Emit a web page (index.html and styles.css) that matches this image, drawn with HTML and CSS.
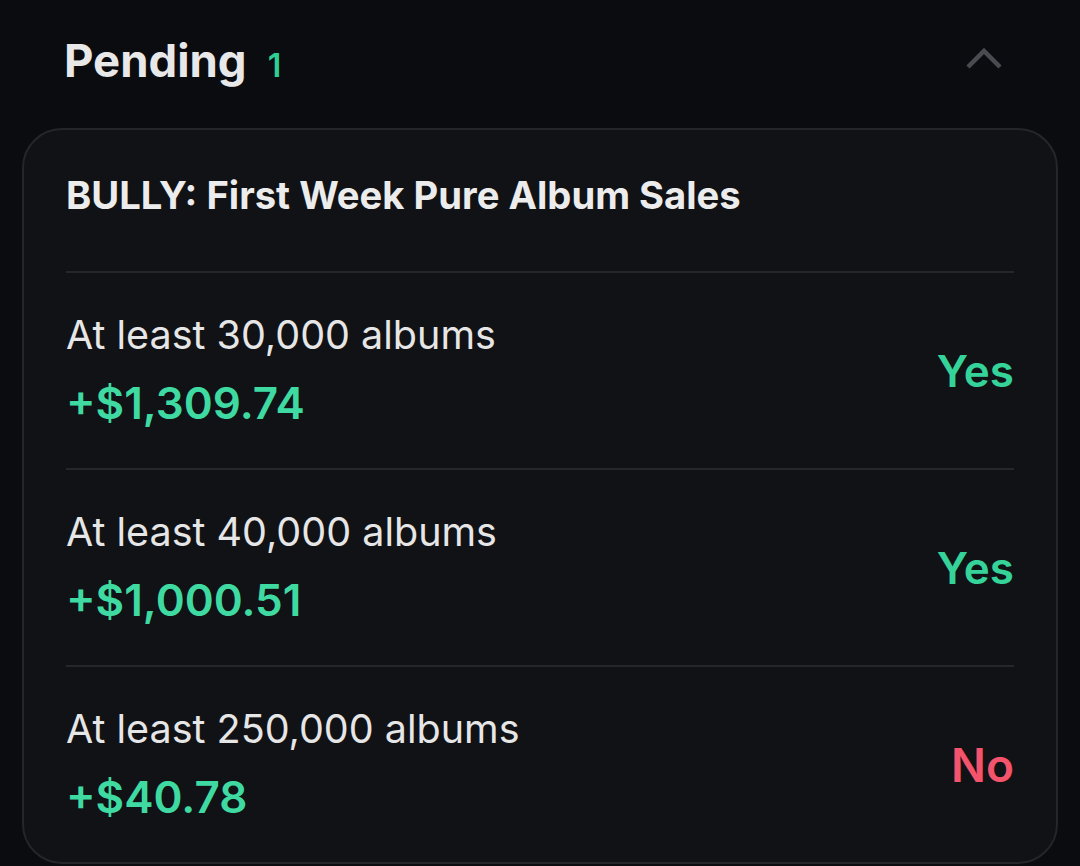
FILE: index.html
```html
<!DOCTYPE html>
<html>
<head>
<meta charset="utf-8">
<link rel="stylesheet" href="styles.css">
</head>
<body>
<div class="page">
  <header class="section-head">
    <div class="head-title">
      <span class="head-label">Pending</span>
      <span class="head-count">1</span>
    </div>
    <svg class="chevron" width="40" height="28" viewBox="0 0 40 28">
      <path d="M4 22 L20 6 L36 22" fill="none" stroke="#4a4b50" stroke-width="4.5" stroke-linecap="butt" stroke-linejoin="miter"/>
    </svg>
  </header>
  <section class="card">
    <div class="card-title">BULLY: First Week Pure Album Sales</div>
    <div class="row">
      <div class="row-main">
        <div class="row-label">At least 30,000 albums</div>
        <div class="row-amount">+$1,309.74</div>
      </div>
      <div class="row-side yes">Yes</div>
    </div>
    <div class="row">
      <div class="row-main">
        <div class="row-label">At least 40,000 albums</div>
        <div class="row-amount">+$1,000.51</div>
      </div>
      <div class="row-side yes">Yes</div>
    </div>
    <div class="row">
      <div class="row-main">
        <div class="row-label">At least 250,000 albums</div>
        <div class="row-amount">+$40.78</div>
      </div>
      <div class="row-side no">No</div>
    </div>
  </section>
</div>
</body>
</html>
```
FILE: styles.css
```css
* { box-sizing: border-box; }
html, body {
  margin: 0;
  padding: 0;
  background: #0b0c0f;
}
body {
  font-family: Inter, "Noto Sans", "Liberation Sans", sans-serif;
  color: #e9e9ea;
  width: 1080px;
  height: 866px;
  overflow: hidden;
}
.page {
  display: flex;
  flex-direction: column;
}
.section-head {
  height: 128px;
  display: flex;
  align-items: center;
  justify-content: space-between;
  padding: 0 76px 8px 64px;
}
.head-title {
  display: flex;
  align-items: baseline;
  gap: 21px;
}
.head-label {
  font-size: 45.5px;
  font-weight: 700;
  color: #e8e8e9;
}
.head-count {
  font-size: 32px;
  font-weight: 600;
  color: #2fcf94;
}
.chevron {
  display: block;
  margin-top: -2px;
}
.card {
  margin: 0 22px;
  height: 736px;
  border: 2px solid #25262a;
  border-radius: 40px;
  background: #111215;
  padding: 0 42px;
  display: flex;
  flex-direction: column;
}
.card-title {
  height: 143px;
  flex: none;
  display: flex;
  align-items: center;
  padding-bottom: 12px;
  font-size: 38.2px;
  font-weight: 700;
  color: #ececed;
  border-bottom: 2px solid #26272b;
}
.row {
  height: 197px;
  flex: none;
  display: flex;
  align-items: center;
  justify-content: space-between;
  border-bottom: 2px solid #26272b;
  padding-top: 0;
}
.row:last-child {
  border-bottom: none;
  height: 195px;
}
.row-main {
  display: flex;
  flex-direction: column;
  gap: 19px;
}
.row-label {
  font-size: 39.5px;
  font-weight: 400;
  color: #e6e6e7;
  line-height: 46px;
}
.row-amount {
  font-size: 44px;
  font-weight: 600;
  color: #3fd9a2;
  line-height: 52px;
}
.row-side {
  font-size: 44px;
  font-weight: 600;
  line-height: 52px;
}
.row-side.yes { color: #35d39a; }
.row-side.no { color: #f4536c; font-size: 46px; }
```
